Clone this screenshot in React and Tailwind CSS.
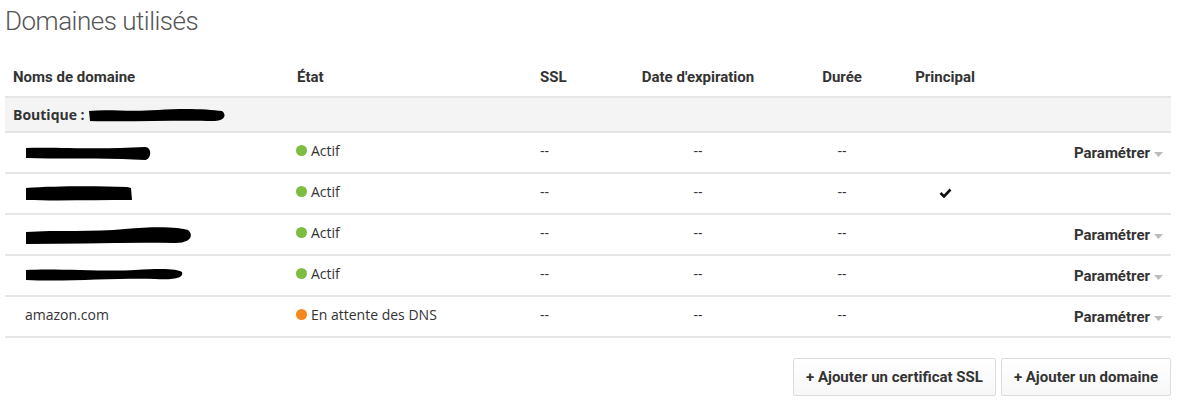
const roboto = { fontFamily: 'Roboto, "Liberation Sans", sans-serif' };

// black scribbles that mask the domain names in the screenshot
const blobs = [
  { w: 128, d: 'M1 5 C25 4 60 6 95 5 L120 4 C127 4 127 16 120 17 L97 16 C60 15 30 16 1 15 Z' },
  { w: 110, d: 'M1 4 C30 2 70 2 102 3 L106 4 L107 16 C70 16 30 17 1 16 Z' },
  { w: 168, d: 'M1 7 C30 5 70 7 100 4 C130 1 155 2 163 5 C169 10 166 18 150 18 C100 17 50 19 1 19 Z' },
  { w: 160, d: 'M1 4 C30 2 80 6 110 4 C140 2 152 3 157 6 C159 12 150 14 130 13 C90 12 40 16 1 14 Z' },
];

const Redacted = ({ i }) => (
  <svg width={blobs[i].w} height="20" viewBox={`0 0 ${blobs[i].w} 20`} className="block mt-[4px]">
    <path d={blobs[i].d} fill="#000" />
  </svg>
);

const Parametrer = () => (
  <button className="inline-flex items-center text-[15px] font-bold text-[#333]" style={roboto}>
    Paramétrer
    <svg width="11" height="7" viewBox="0 0 11 7" className="ml-[3px] mt-[1px]">
      <path d="M1 1 L10 1 L5.5 6 Z" fill="#bbb" />
    </svg>
  </button>
);

const rows = [
  { name: <Redacted i={0} />, status: 'Actif', dot: 'bg-[#7cbd42]', action: true },
  { name: <Redacted i={1} />, status: 'Actif', dot: 'bg-[#7cbd42]', main: true },
  { name: <Redacted i={2} />, status: 'Actif', dot: 'bg-[#7cbd42]', action: true },
  { name: <Redacted i={3} />, status: 'Actif', dot: 'bg-[#7cbd42]', action: true },
  { name: 'amazon.com', status: 'En attente des DNS', dot: 'bg-[#f5871f]', action: true },
];

const cols = 'grid grid-cols-[284px_243px_101px_130px_158px_1fr] items-center';

export default function App() {
  return (
    <div className="bg-white w-[1181px] h-[415px] px-[5px] text-[#333]" style={{ fontFamily: '"Open Sans", "Liberation Sans", sans-serif' }}>
      <h1 className="text-[26px] font-light tracking-[-0.5px] text-[#555] leading-[34px] pt-[4px]" style={roboto}>
        Domaines utilisés
      </h1>

      <div className="w-[1166px] mt-[23px]">
        <div className={`${cols} h-[37px] text-[15px] font-bold border-b-2 border-[#e6e6e6] pb-[2px]`} style={roboto}>
          <div className="pl-[8px]">Noms de domaine</div>
          <div className="pl-[8px]">État</div>
          <div className="pl-[8px]">SSL</div>
          <div className="text-center">Date d'expiration</div>
          <div className="text-center">Durée</div>
          <div className="w-[48px] flex justify-center">Principal</div>
        </div>

        <div className="h-[35px] bg-[#f4f4f4] border-b-2 border-[#e6e6e6] flex items-center pl-[8px] text-[14px] font-bold">
          <span>Boutique :</span>
          <svg width="140" height="18" viewBox="0 0 140 18" className="ml-[3px]">
            <path d="M1 5 C20 3 40 6 70 4 C95 2 120 3 134 5 C139 9 137 15 125 15 C90 14 40 16 2 15 Z" fill="#000" />
          </svg>
        </div>

        {rows.map((r, i) => (
          <div key={i} className={`${cols} h-[41px] border-b-2 border-[#e6e6e6] text-[14px] pb-[4px]`}>
            <div className="pl-[20px]">{r.name}</div>
            <div className="pl-[7px] flex items-center">
              <span className={`inline-block w-[11px] h-[11px] rounded-full mr-[4px] ${r.dot}`} />
              {r.status}
            </div>
            <div className="pl-[8px]">--</div>
            <div className="text-center">--</div>
            <div className="text-center">--</div>
            <div className="grid grid-cols-[48px_1fr] items-center">
              <div className="flex justify-center pt-[2px]">
                {r.main && (
                  <svg width="13" height="10" viewBox="0 0 13 10">
                    <path d="M1.5 5 L5 8.5 L11.5 1.5" stroke="#111" strokeWidth="2.6" fill="none" />
                  </svg>
                )}
              </div>
              <div className="text-right pr-[7px] pt-[6px]">{r.action && <Parametrer />}</div>
            </div>
          </div>
        ))}

        <div className="flex justify-end gap-[5px] mt-[20px] pr-[0px]">
          {['+ Ajouter un certificat SSL', '+ Ajouter un domaine'].map((t) => (
            <button
              key={t}
              className="h-[38px] px-[12px] border border-[#dcdcdc] rounded-[2px] bg-gradient-to-b from-white to-[#f7f7f7] text-[15px] font-bold text-[#333]"
              style={roboto}
            >
              {t}
            </button>
          ))}
        </div>
      </div>
    </div>
  );
}
